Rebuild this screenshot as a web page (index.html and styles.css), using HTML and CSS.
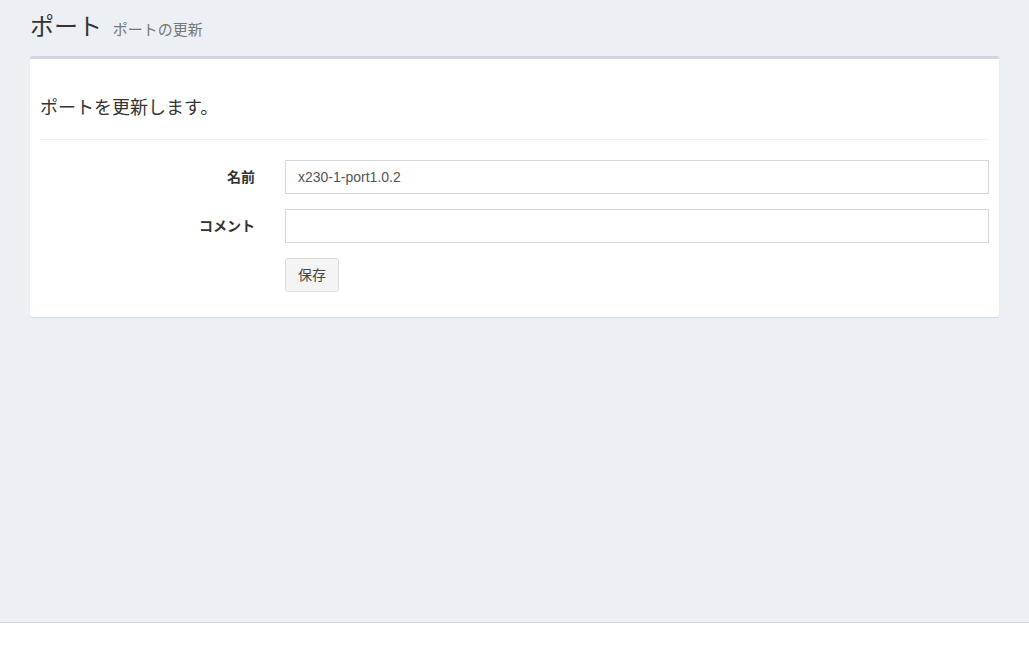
FILE: index.html
```html
<!DOCTYPE html>
<html lang="ja">
<head>
<meta charset="utf-8">
<title>ポート</title>
<link rel="stylesheet" href="styles.css">
</head>
<body>
<div class="wrapper">
  <div class="content-wrapper">
    <section class="content-header">
      <h1>ポート <small>ポートの更新</small></h1>
    </section>
    <section class="content">
      <div class="box">
        <div class="box-body">
          <h4 class="lead">ポートを更新します。</h4>
          <hr>
          <form class="form-horizontal">
            <div class="form-group">
              <label class="control-label">名前</label>
              <div class="field"><input class="form-control" type="text" value="x230-1-port1.0.2"></div>
            </div>
            <div class="form-group">
              <label class="control-label">コメント</label>
              <div class="field"><input class="form-control" type="text" value=""></div>
            </div>
            <div class="form-group">
              <div class="control-label"></div>
              <div class="field"><button class="btn" type="button">保存</button></div>
            </div>
          </form>
        </div>
      </div>
    </section>
  </div>
  <footer class="main-footer"></footer>
</div>
</body>
</html>
```
FILE: styles.css
```css
* { box-sizing: border-box; }
html, body { margin: 0; padding: 0; height: 100%; }
body {
  font-family: "Liberation Sans", Arial, "Noto Sans CJK JP", sans-serif;
  font-size: 14px;
  color: #333;
  background: #fff;
}
.wrapper {
  display: flex;
  flex-direction: column;
  height: 100%;
}
.content-wrapper {
  height: 622px;
  flex: none;
  background: #ecf0f5;
}
.main-footer {
  flex: 1;
  background: #fff;
  border-top: 1px solid #d2d6de;
}
.content-header {
  padding: 14px 30px 0 30px;
}
.content-header h1 {
  margin: 0;
  height: 27px;
  font-size: 24px;
  font-weight: 400;
  line-height: 26px;
  color: #333;
}
.content-header h1 small {
  font-size: 15px;
  line-height: 15px;
  color: #777;
  padding-left: 4px;
  font-weight: 400;
}
.content {
  padding: 15px 30px;
}
.box {
  background: #fff;
  border-top: 3px solid #d2d6de;
  border-radius: 3px;
  box-shadow: 0 1px 1px rgba(0,0,0,0.1);
}
.box-body {
  padding: 10px 10px 25px 10px;
}
.lead {
  margin: 29px 0 0 0;
  font-size: 18px;
  line-height: 20px;
  font-weight: 400;
  color: #333;
}
hr {
  margin: 21px 0 20px 0;
  border: 0;
  border-top: 1px solid #eee;
  height: 0;
}
.form-horizontal {
  display: flex;
  flex-direction: column;
  gap: 15px;
}
.form-group {
  display: grid;
  grid-template-columns: 215px 1fr;
  gap: 30px;
  align-items: center;
}
.control-label {
  text-align: right;
  font-weight: 700;
  font-size: 14px;
  line-height: 20px;
}
.form-control {
  display: block;
  width: 100%;
  height: 34px;
  padding: 6px 12px;
  font-family: inherit;
  font-size: 14px;
  color: #555;
  background: #fff;
  border: 1px solid #d2d6de;
  border-radius: 0;
  outline: none;
}
.btn {
  height: 34px;
  padding: 6px 12px;
  font-family: inherit;
  font-size: 14px;
  color: #444;
  background: #f4f4f4;
  border: 1px solid #ddd;
  border-radius: 3px;
  line-height: 20px;
}
```
